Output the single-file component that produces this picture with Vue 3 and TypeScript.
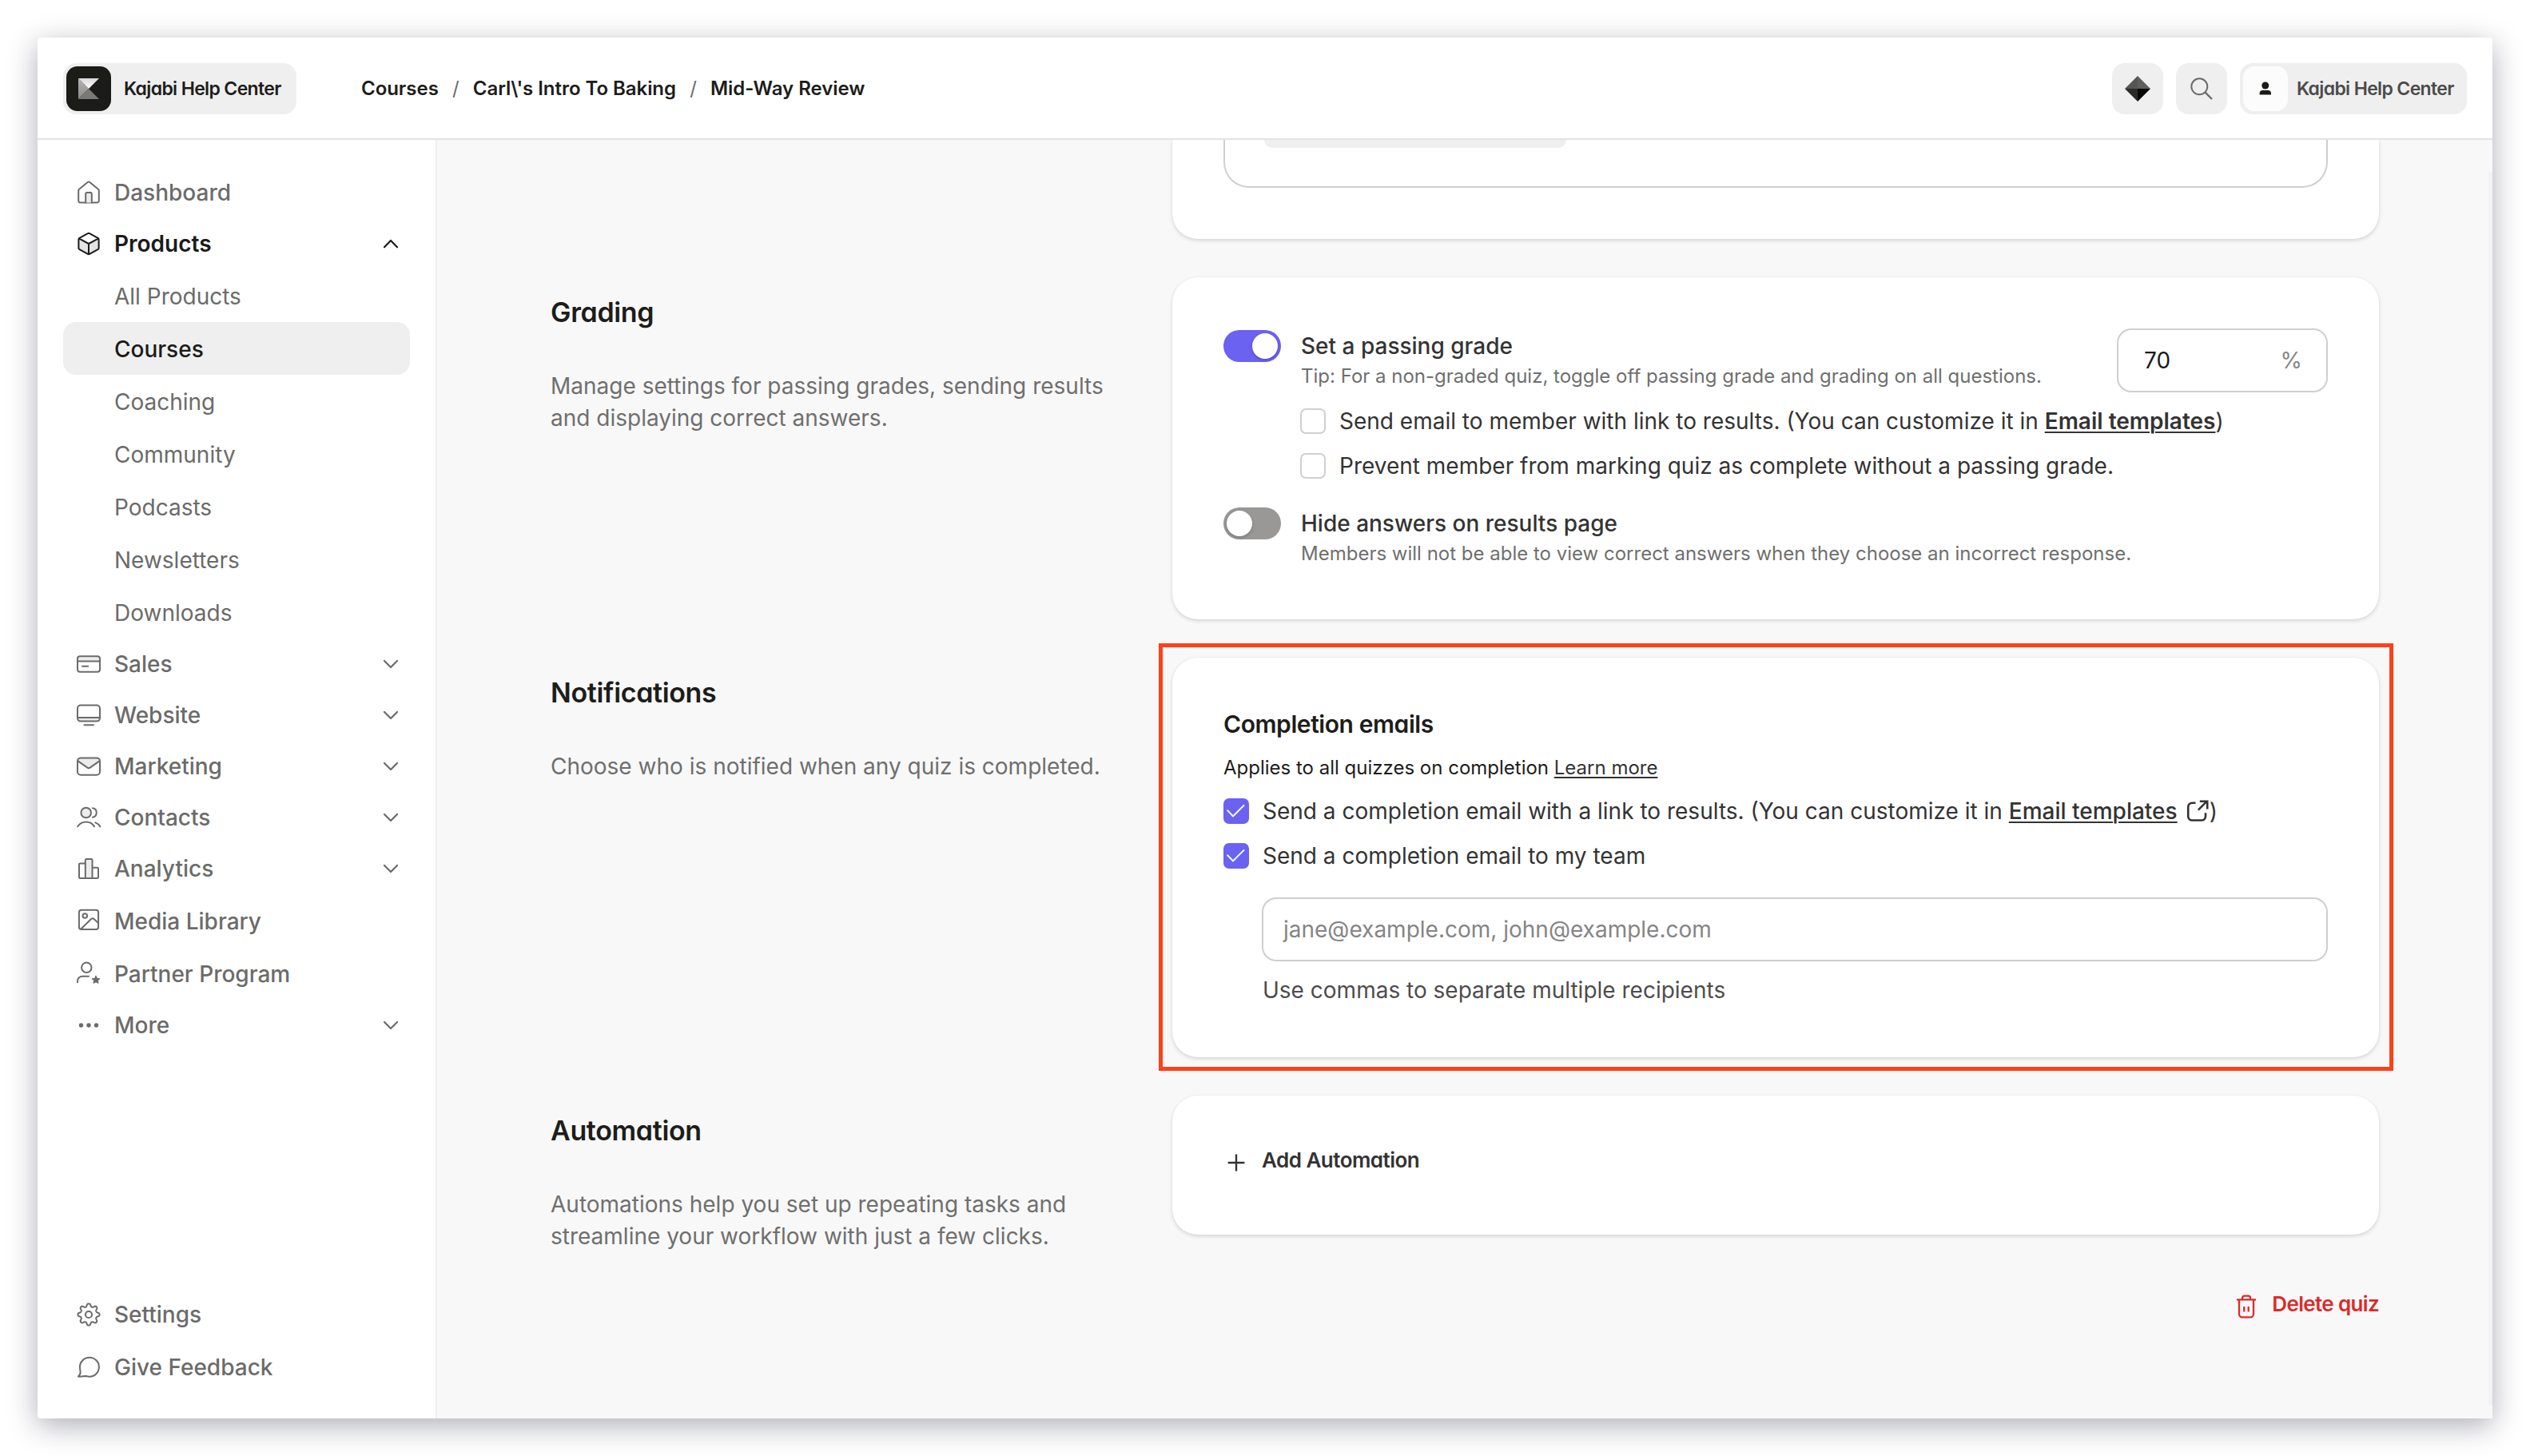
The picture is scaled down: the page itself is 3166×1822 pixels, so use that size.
<script setup lang="ts">
import { ref } from 'vue'

interface NavItem {
  label: string
  icon?: string
  chevron?: 'up' | 'down'
  active?: boolean
  strong?: boolean
  child?: boolean
}

// Outline of an eight-toothed cog centred in a 32px box
function cogPath(): string {
  const points: string[] = []
  for (let i = 0; i < 144; i++) {
    const a = (i / 144) * Math.PI * 2
    const wave = Math.tanh(1.5 * Math.cos(8 * a)) / Math.tanh(1.5)
    const r = 11.9 + 1.7 * wave
    points.push(`${(16 + r * Math.cos(a)).toFixed(2)} ${(16 + r * Math.sin(a)).toFixed(2)}`)
  }
  return `M${points.join('L')}Z`
}

const icons: Record<string, string> = {
  home: '<path d="M3.2 13.6a2.4 2.4 0 0 1 .9-1.9L14.7 3a2 2 0 0 1 2.6 0l10.6 8.7a2.4 2.4 0 0 1 .9 1.9V26a2.6 2.6 0 0 1-2.6 2.6H5.8A2.6 2.6 0 0 1 3.2 26Z"/><path fill="#ececec" d="M12.2 28.4V17.6a1.5 1.5 0 0 1 1.5-1.5h4.6a1.5 1.5 0 0 1 1.5 1.5v10.8"/>',
  box: '<path fill="#e4e4e4" stroke="none" d="M3.4 9.4 16 16l12.6-6.6v13.4L16 29.6 3.4 22.8Z"/><path d="M14.9 3.2a2.2 2.2 0 0 1 2.2 0l10.4 5.6a2 2 0 0 1 1.1 1.8v10.8a2 2 0 0 1-1.1 1.8l-10.4 5.6a2.2 2.2 0 0 1-2.2 0L4.5 23.2a2 2 0 0 1-1.1-1.8V10.600a2 2 0 0 1 1.1-1.8ZM3.8 9.400 16 16l12.200-6.600M16 16v13"/>',
  card: '<path fill="#ececec" stroke="none" d="M2 12.500V9l3-2.700h22L30 9v3.500Z"/><rect x="2" y="6.300" width="28" height="19.400" rx="3"/><path d="M2 12.600h28M8 18.700h7.200"/>',
  monitor: '<path fill="#ececec" stroke="none" d="M2 19h28v3l-4 2H6l-4-2Z"/><rect x="2" y="3.600" width="28" height="20" rx="4"/><path d="M2 19h28M10.500 28.200h11.500"/>',
  mail: '<path fill="#ececec" stroke="none" d="M2.600 9 6 5.400h20L29.400 9 18 17.400a4 4 0 0 1-4 0Z"/><rect x="2" y="5.400" width="28" height="21.400" rx="4"/><path d="M2.600 9.400 14 17.400a3.400 3.400 0 0 0 4 0l11.400-8"/>',
  people: '<circle cx="12.700" cy="10" r="6.300" fill="#ececec"/><path d="M2.200 27.300C4.400 24 8.200 21.400 12.700 21.400s8.200 2.300 10.300 5.700M21 4.300c6.300 1 6.300 10.300 0 11.500M24.400 22.400c2.400.9 4.600 2.600 5.900 4.900"/>',
  bars: '<path fill="#ececec" stroke="none" d="M11.800 4h8.700v24h-8.700Z"/><path d="M11.800 28V5.200A1.200 1.200 0 0 1 13 4h6.300a1.200 1.200 0 0 1 1.200 1.200V28M11.800 9.400H5.200A1.200 1.200 0 0 0 4 10.600v16.200A1.200 1.200 0 0 0 5.200 28h21.600a1.200 1.200 0 0 0 1.200-1.200V16a1.200 1.200 0 0 0-1.200-1.200h-6.300"/>',
  image: '<rect x="3.900" y="1.800" width="24.200" height="24.200" rx="3"/><circle cx="11.300" cy="9" r="2.800"/><path d="m6.800 25 12.300-12a2.600 2.600 0 0 1 3.500 0l5.300 5"/>',
  partner: '<circle cx="13.300" cy="7.800" r="6.200"/><path d="M2 26.300v-1.500a6 6 0 0 1 6-6h8"/><path fill="currentColor" stroke-width="1" d="m25 18.300 1.500 3 3.300.5-2.400 2.300.6 3.300-3-1.600-3 1.600.6-3.300-2.400-2.300 3.300-.5Z"/>',
  dots: '<g fill="currentColor" stroke="none"><circle cx="6.500" cy="16" r="2.700"/><circle cx="16" cy="16" r="2.700"/><circle cx="25.500" cy="16" r="2.700"/></g>',
  cog: `<path d="${cogPath()}"/><circle cx="16" cy="16" r="4.100"/>`,
  chat: '<path d="M17 3.700a12 12 0 1 1-.2 24c-2.200 0-3.300-.8-5-.8-2.600.1-5.400 1.200-8.800.6 1.900-1.600 2.900-3.900 2.600-6.200-.4-1.900-.7-3.600-.7-5.600a12 12 0 0 1 12.100-12Z"/>',
}

const nav: NavItem[] = [
  { label: 'Dashboard', icon: 'home' },
  { label: 'Products', icon: 'box', chevron: 'up', strong: true },
  { label: 'All Products', child: true },
  { label: 'Courses', child: true, active: true },
  { label: 'Coaching', child: true },
  { label: 'Community', child: true },
  { label: 'Podcasts', child: true },
  { label: 'Newsletters', child: true },
  { label: 'Downloads', child: true },
  { label: 'Sales', icon: 'card', chevron: 'down' },
  { label: 'Website', icon: 'monitor', chevron: 'down' },
  { label: 'Marketing', icon: 'mail', chevron: 'down' },
  { label: 'Contacts', icon: 'people', chevron: 'down' },
  { label: 'Analytics', icon: 'bars', chevron: 'down' },
  { label: 'Media Library', icon: 'image' },
  { label: 'Partner Program', icon: 'partner' },
  { label: 'More', icon: 'dots', chevron: 'down' },
]

const footerNav: NavItem[] = [
  { label: 'Settings', icon: 'cog' },
  { label: 'Give Feedback', icon: 'chat' },
]

const crumbs = ['Courses', "Carl\\'s Intro To Baking", 'Mid-Way Review']
const passingGrade = ref('70')
const recipients = ref('')
</script>

<template>
  <div class="page">
    <div class="window">
      <header class="topbar">
        <div class="site-pill">
          <span class="site-logo">
            <svg width="26" height="26" viewBox="0 0 26 26">
              <defs>
                <linearGradient id="kTop" x1="0" y1="0" x2="0" y2="1">
                  <stop offset="0" stop-color="#d9d6d9" />
                  <stop offset="1" stop-color="#ffffff" />
                </linearGradient>
                <linearGradient id="kLeft" x1="0" y1="0" x2="0" y2="1">
                  <stop offset="0" stop-color="#b5b5b5" />
                  <stop offset="1" stop-color="#8b8a89" />
                </linearGradient>
              </defs>
              <path d="M0 0 13 13 0 26Z" fill="url(#kLeft)" />
              <path d="M0 0H26L13 13Z" fill="url(#kTop)" />
              <path d="M0 26 13 13 26 26Z" fill="#7b7977" />
            </svg>
          </span>
          <span class="brand-text">Kajabi Help Center</span>
        </div>
        <nav class="crumbs">
          <template v-for="(crumb, i) in crumbs" :key="crumb">
            <span v-if="i > 0" class="slash">/</span>
            <span class="crumb">{{ crumb }}</span>
          </template>
        </nav>
        <div class="actions">
          <button class="square-btn">
            <svg width="32" height="32" viewBox="0 0 32 32">
              <path d="M16 0 0 16H16Z" fill="#555553" />
              <path d="M16 0 32 16H16Z" fill="#5f5f5d" />
              <path d="M0 16 16 32V16Z" fill="#2b2b29" />
              <path d="M32 16 16 32V16Z" fill="#080808" />
            </svg>
          </button>
          <button class="square-btn">
            <svg width="32" height="32" viewBox="0 0 32 32" fill="none" stroke="#6b6b69" stroke-width="2">
              <circle cx="13.300" cy="13.300" r="10" />
              <path d="M20.600 20.600 29 29" stroke-width="2.400" />
            </svg>
          </button>
          <div class="account">
            <span class="avatar">
              <svg width="16" height="18" viewBox="0 0 16 18" fill="#1b1b18">
                <circle cx="7.800" cy="5" r="4.500" />
                <path d="M.6 16.400v-1.500A4 4 0 0 1 4.600 10.900h6.400a4 4 0 0 1 4 4v1.500Z" />
              </svg>
            </span>
            <span class="brand-text">Kajabi Help Center</span>
          </div>
        </div>
      </header>

      <div class="body">
        <aside class="sidebar">
          <div
            v-for="item in nav"
            :key="item.label"
            class="nav-row"
            :class="{ toggle: item.chevron, child: item.child, active: item.active, strong: item.strong }"
          >
            <svg v-if="item.icon" class="nav-icon" viewBox="0 0 32 32" v-html="icons[item.icon]" />
            <span class="nav-label">{{ item.label }}</span>
            <svg v-if="item.chevron" class="chevron" viewBox="0 0 32 32">
              <path :d="item.chevron === 'up' ? 'M8 20.300 16 12l8 8.300' : 'M8 11.900 16 20l8-8.100'" />
            </svg>
          </div>
          <div class="spacer" />
          <div v-for="item in footerNav" :key="item.label" class="nav-row">
            <svg class="nav-icon" viewBox="0 0 32 32" v-html="icons[item.icon!]" />
            <span class="nav-label">{{ item.label }}</span>
          </div>
        </aside>

        <main class="content">
          <section class="row">
            <div class="intro" />
            <div class="card cut">
              <div class="cut-box"><div class="cut-pill" /></div>
            </div>
          </section>

          <section class="row">
            <div class="intro">
              <h2>Grading</h2>
              <p>Manage settings for passing grades, sending results<br />and displaying correct answers.</p>
            </div>
            <div class="card grading">
              <div class="setting first">
                <span class="switch on"><i /></span>
                <div class="setting-text">
                  <div class="label">Set a passing grade</div>
                  <div class="hint">Tip: For a non-graded quiz, toggle off passing grade and grading on all questions.</div>
                </div>
                <div class="grade-field">
                  <span>{{ passingGrade }}</span><span class="unit">%</span>
                </div>
              </div>
              <div class="checks nested">
                <div class="check-row">
                  <span class="checkbox" />
                  <span class="text">Send email to member with link to results. (You can customize it in <a class="bold">Email templates</a>)</span>
                </div>
                <div class="check-row">
                  <span class="checkbox" />
                  <span class="text">Prevent member from marking quiz as complete without a passing grade.</span>
                </div>
              </div>
              <div class="setting">
                <span class="switch"><i /></span>
                <div class="setting-text">
                  <div class="label">Hide answers on results page</div>
                  <div class="hint">Members will not be able to view correct answers when they choose an incorrect response.</div>
                </div>
              </div>
            </div>
          </section>

          <section class="row">
            <div class="intro">
              <h2>Notifications</h2>
              <p>Choose who is notified when any quiz is completed.</p>
            </div>
            <div class="card notifications">
              <div class="highlight" />
              <h3>Completion emails</h3>
              <div class="applies">Applies to all quizzes on completion <a>Learn more</a></div>
              <div class="checks">
                <div class="check-row">
                  <span class="checkbox checked">
                    <svg width="32" height="32" viewBox="0 0 32 32"><path d="M4.600 14.600 12 22.400 26 8.400" /></svg>
                  </span>
                  <span class="text">Send a completion email with a link to results. (You can customize it in <a class="medium">Email templates</a></span>
                  <svg class="external" viewBox="0 0 28 28">
                    <path d="M11.500 3.700H7.200a5 5 0 0 0-5 5v11.800a5 5 0 0 0 5 5H19a5 5 0 0 0 5-5v-4.200M14.800 12.600 25 2.400M16.800 1.700h9.400v9.800" />
                  </svg>
                  <span class="text">)</span>
                </div>
                <div class="check-row">
                  <span class="checkbox checked">
                    <svg width="32" height="32" viewBox="0 0 32 32"><path d="M4.600 14.600 12 22.400 26 8.400" /></svg>
                  </span>
                  <span class="text">Send a completion email to my team</span>
                </div>
              </div>
              <div class="email-field">{{ recipients || 'jane@example.com, john@example.com' }}</div>
              <div class="help">Use commas to separate multiple recipients</div>
            </div>
          </section>

          <section class="row">
            <div class="intro">
              <h2>Automation</h2>
              <p>Automations help you set up repeating tasks and<br />streamline your workflow with just a few clicks.</p>
            </div>
            <div class="card automation">
              <svg class="plus" viewBox="0 0 32 32"><path d="M16 5.600v20.800M5.600 16h20.800" /></svg>
              <span class="add-text">Add Automation</span>
            </div>
          </section>

          <div class="delete">
            <svg class="trash" viewBox="0 0 32 32">
              <path d="M4 7.300h24M11 7V5.200a2.600 2.600 0 0 1 2.600-2.600h4.800A2.600 2.600 0 0 1 21 5.200V7M7 7.500v17.800a4 4 0 0 0 4 4h10a4 4 0 0 0 4-4V7.500M13.300 16v6.500M18.700 16v6.500" />
            </svg>
            <span class="delete-text">Delete quiz</span>
          </div>
          <div class="edge" />
        </main>
      </div>
    </div>
  </div>
</template>

<style>
html,
body {
  margin: 0;
  background: #fff;
  overflow: hidden;
}
</style>

<style scoped>
* {
  box-sizing: border-box;
}

.page {
  width: 3166px;
  height: 1822px;
  padding: 47px;
  background: #fff;
  font-family: Inter, "Liberation Sans", sans-serif;
  font-size: 28px;
  line-height: 40px;
  color: #333;
  white-space: nowrap;
}

.window {
  display: flex;
  flex-direction: column;
  width: 3072px;
  height: 1728px;
  border-radius: 4px;
  background: #fff;
  box-shadow: 0 9px 36px rgba(14, 18, 40, 0.34);
}

.topbar {
  display: flex;
  height: 128px;
  flex: none;
  padding: 32px 32px 0;
  border-bottom: 2px solid #e3e3e3;
}

.site-pill,
.account {
  display: flex;
  align-items: center;
  height: 64px;
  padding: 4px;
  border-radius: 16px;
  background: #efefef;
}

.site-pill {
  width: 292px;
  gap: 16px;
}

.site-logo {
  display: flex;
  align-items: center;
  justify-content: center;
  width: 56px;
  height: 56px;
  border-radius: 14px;
  background: #1b1b18;
}

.brand-text {
  font-size: 23px;
  font-weight: 600;
  letter-spacing: -0.028em;
  font-feature-settings: "cv11";
  color: #1d1d1b;
}

.crumbs {
  display: flex;
  margin-left: 81px;
  font-size: 24px;
  line-height: 64px;
  font-weight: 600;
  letter-spacing: -0.04px;
  color: #1d1d1b;
}

.slash {
  width: 43px;
  text-align: center;
  font-weight: 400;
  color: #6b6b6b;
}

.actions {
  display: flex;
  gap: 16px;
  margin-left: auto;
}

.square-btn {
  display: flex;
  align-items: center;
  justify-content: center;
  width: 64px;
  height: 64px;
  padding: 0;
  border: 0;
  border-radius: 16px;
  background: #efefef;
}

.account {
  width: 284px;
  gap: 11px;
}

.account .brand-text {
  color: #4b4b4a;
}

.avatar {
  display: flex;
  align-items: center;
  justify-content: center;
  width: 56px;
  height: 56px;
  border-radius: 14px;
  background: #fcfcfc;
}

.body {
  display: flex;
  flex: 1;
  min-height: 0;
}

.sidebar {
  display: flex;
  flex-direction: column;
  width: 500px;
  flex: none;
  padding: 32px 32px 32px;
  border-right: 2px solid #efefef;
  color: #6b6b6a;
}

.nav-row {
  display: flex;
  align-items: center;
  gap: 16px;
  height: 66px;
  flex: none;
  padding: 2px 8px 0 16px;
  border-radius: 16px;
  font-weight: 500;
}

.nav-row.toggle {
  height: 64px;
  padding-top: 0;
}

.nav-row.child {
  padding-left: 64px;
  font-weight: 400;
}

.nav-row.active {
  width: 434px;
  background: #efefef;
  color: #1b1b1a;
  font-weight: 500;
}

.nav-row.strong {
  color: #1b1b1a;
  font-weight: 600;
}

.nav-icon,
.chevron {
  width: 32px;
  height: 32px;
  flex: none;
  fill: none;
  stroke: currentColor;
  stroke-width: 2;
  stroke-linecap: round;
  stroke-linejoin: round;
}

.chevron {
  margin-left: auto;
  stroke-width: 2.200;
}

.spacer {
  flex: 1;
}

.content {
  position: relative;
  flex: 1;
  padding: 0 142px;
  overflow: hidden;
  background: #f8f8f8;
}

.row {
  display: flex;
  margin-bottom: 48px;
}

.intro {
  width: 778px;
  flex: none;
  padding-top: 21px;
}

h2 {
  margin: 0 0 50px;
  font-size: 34px;
  line-height: 45px;
  font-weight: 600;
  letter-spacing: -0.01em;
  font-feature-settings: "cv11";
  color: #1d1d1b;
}

p {
  margin: 0;
  color: #6f6f6f;
}

.card {
  position: relative;
  flex: 1;
  padding: 64px;
  border-radius: 32px;
  background: #fff;
  box-shadow: 0 2px 5px rgba(0, 0, 0, 0.14), 0 0 2px rgba(0, 0, 0, 0.05);
}

.cut {
  height: 124px;
  padding-top: 0;
  border-radius: 0 0 32px 32px;
}

.cut-box {
  height: 60px;
  padding-left: 49px;
  border: solid #cfcfcf;
  border-width: 0 2px 2px;
  border-radius: 0 0 32px 32px;
}

.cut-pill {
  width: 378px;
  height: 10px;
  border-radius: 0 0 16px 16px;
  background: #efefef;
}

.grading {
  height: 428px;
}

.setting {
  display: flex;
}

.setting.first {
  height: 80px;
  margin-bottom: 16px;
}

.first .switch,
.first .setting-text {
  margin-top: 2px;
}

.switch {
  display: flex;
  width: 72px;
  height: 40px;
  padding: 4px;
  border-radius: 20px;
  background: #999896;
}

.switch.on {
  justify-content: flex-end;
  background: #6b62f2;
}

.switch i {
  width: 32px;
  height: 32px;
  border-radius: 50%;
  background: #fff;
  box-shadow: 0 2px 4px rgba(0, 0, 0, 0.18);
}

.setting-text {
  margin-left: 25px;
}

.label {
  font-weight: 500;
}

.hint {
  font-size: 24px;
  line-height: 35px;
  color: #6f6f6f;
}

.grade-field {
  display: flex;
  align-items: center;
  justify-content: space-between;
  width: 264px;
  height: 80px;
  margin-left: auto;
  padding: 0 30px 0 32px;
  border: 2px solid #cfcfcf;
  border-radius: 18px;
  color: #1b1b1a;
}

.unit {
  color: #858585;
}

.checks {
  display: flex;
  flex-direction: column;
  gap: 16px;
}

.checks.nested {
  padding-left: 96px;
  margin-bottom: 32px;
}

.check-row {
  display: flex;
  align-items: center;
  height: 40px;
}

.checkbox {
  width: 32px;
  height: 32px;
  flex: none;
  margin-right: 17px;
  border: 2px solid #d0d0d0;
  border-radius: 7px;
}

.checkbox.checked {
  border: 0;
  background: #6b62f2;
}

.checkbox svg {
  display: block;
  fill: none;
  stroke: #fff;
  stroke-width: 2;
}

a {
  text-decoration: underline;
  text-decoration-thickness: 2px;
  text-underline-offset: 3px;
}

a.bold {
  font-weight: 600;
}

a.medium {
  font-weight: 500;
}

.notifications {
  padding-top: 63px;
  height: 500px;
}

.highlight {
  position: absolute;
  left: -17px;
  top: -18px;
  width: 1545px;
  height: 535px;
  border: 5px solid #ff4019;
}

h3 {
  margin: 0 0 17px;
  font-size: 30px;
  line-height: 40px;
  font-weight: 600;
  letter-spacing: -0.014em;
  font-feature-settings: "cv11";
  color: #1d1d1b;
}

.applies {
  margin-bottom: 17px;
  font-size: 24px;
  line-height: 35px;
  color: #1d1d1b;
}

.applies a {
  color: #333;
}

.external {
  width: 28px;
  height: 28px;
  margin: 0 1px 0 11px;
  fill: none;
  stroke: #333;
  stroke-width: 2.600;
}

.email-field {
  height: 80px;
  margin: 32px 0 16px 48px;
  padding: 18px 25px;
  border: 2px solid #cfcfcf;
  border-radius: 18px;
  color: #858585;
}

.help {
  padding-left: 49px;
  color: #4d4d4d;
}

.automation {
  display: flex;
  height: 174px;
  padding-top: 60px;
}

.plus {
  width: 32px;
  height: 32px;
  margin: 8px 16px 0 0;
  fill: none;
  stroke: #333;
  stroke-width: 2.400;
}

.add-text,
.delete-text {
  font-size: 26px;
  line-height: 41px;
  font-weight: 600;
  letter-spacing: -0.02em;
  font-feature-settings: "cv11";
}

.delete-text {
  letter-spacing: -0.025em;
}

.delete {
  display: flex;
  justify-content: flex-end;
  margin-top: -4px;
  color: #dc2a2a;
}

.trash {
  width: 32px;
  height: 32px;
  margin: 8px 16px 0 0;
  fill: none;
  stroke: currentColor;
  stroke-width: 2.300;
  stroke-linejoin: round;
}

.edge {
  position: absolute;
  top: 40px;
  right: 0;
  width: 8px;
  bottom: 16px;
  background: linear-gradient(to right, rgba(0, 0, 0, 0), rgba(0, 0, 0, 0.03));
}
</style>
